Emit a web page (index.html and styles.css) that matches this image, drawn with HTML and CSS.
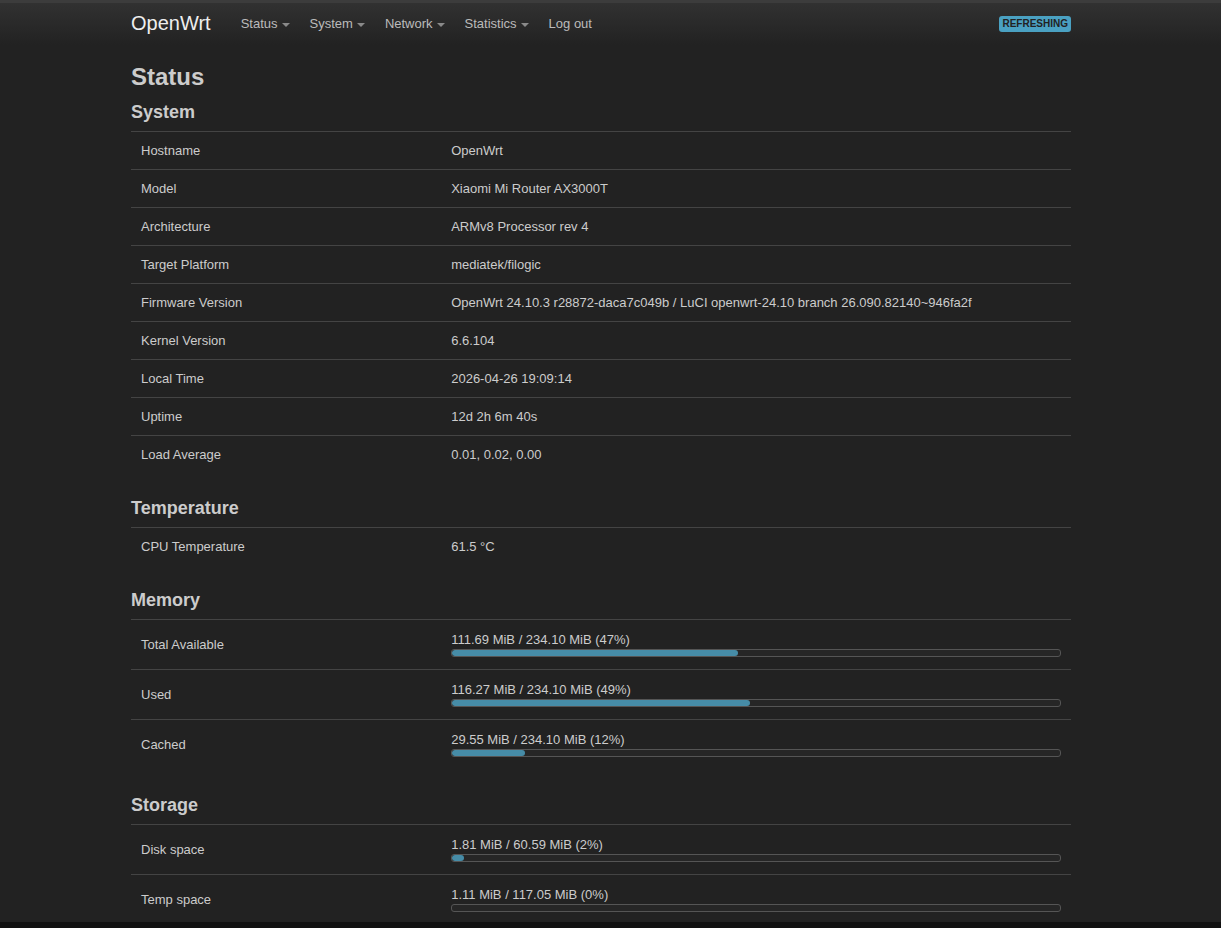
FILE: index.html
```html
<!DOCTYPE html>
<html lang="en">
<head>
<meta charset="UTF-8">
<meta name="viewport" content="width=device-width, initial-scale=1.0">
<title>OpenWrt - Status - LuCI</title>
<link rel="stylesheet" href="styles.css">
</head>
<body>

<header class="navbar">
    <div class="container nav-inner">
        <a class="brand" href="#">OpenWrt</a>
        <ul class="nav">
            <li><a href="#">Status<span class="caret"></span></a></li>
            <li><a href="#">System<span class="caret"></span></a></li>
            <li><a href="#">Network<span class="caret"></span></a></li>
            <li><a href="#">Statistics<span class="caret"></span></a></li>
            <li><a href="#">Log out</a></li>
        </ul>
        <span class="badge">REFRESHING</span>
    </div>
</header>

<main class="container">
    <h2>Status</h2>

    <div class="section">
        <h3>System</h3>
        <div class="table">
            <div class="tr"><div class="td">Hostname</div><div class="td">OpenWrt</div></div>
            <div class="tr"><div class="td">Model</div><div class="td">Xiaomi Mi Router AX3000T</div></div>
            <div class="tr"><div class="td">Architecture</div><div class="td">ARMv8 Processor rev 4</div></div>
            <div class="tr"><div class="td">Target Platform</div><div class="td">mediatek/filogic</div></div>
            <div class="tr"><div class="td">Firmware Version</div><div class="td">OpenWrt 24.10.3 r28872-daca7c049b / LuCI openwrt-24.10 branch 26.090.82140~946fa2f</div></div>
            <div class="tr"><div class="td">Kernel Version</div><div class="td">6.6.104</div></div>
            <div class="tr"><div class="td">Local Time</div><div class="td">2026-04-26 19:09:14</div></div>
            <div class="tr"><div class="td">Uptime</div><div class="td">12d 2h 6m 40s</div></div>
            <div class="tr"><div class="td">Load Average</div><div class="td">0.01, 0.02, 0.00</div></div>
        </div>
    </div>

    <div class="section">
        <h3>Temperature</h3>
        <div class="table">
            <div class="tr"><div class="td">CPU Temperature</div><div class="td">61.5 °C</div></div>
        </div>
    </div>

    <div class="section">
        <h3>Memory</h3>
        <div class="table">
            <div class="tr bar-row">
                <div class="td">Total Available</div>
                <div class="td">
                    <div class="bar-title">111.69 MiB / 234.10 MiB (47%)</div>
                    <div class="cbi-progressbar"><div style="width: 47%"></div></div>
                </div>
            </div>
            <div class="tr bar-row">
                <div class="td">Used</div>
                <div class="td">
                    <div class="bar-title">116.27 MiB / 234.10 MiB (49%)</div>
                    <div class="cbi-progressbar"><div style="width: 49%"></div></div>
                </div>
            </div>
            <div class="tr bar-row">
                <div class="td">Cached</div>
                <div class="td">
                    <div class="bar-title">29.55 MiB / 234.10 MiB (12%)</div>
                    <div class="cbi-progressbar"><div style="width: 12%"></div></div>
                </div>
            </div>
        </div>
    </div>

    <div class="section">
        <h3>Storage</h3>
        <div class="table">
            <div class="tr bar-row">
                <div class="td">Disk space</div>
                <div class="td">
                    <div class="bar-title">1.81 MiB / 60.59 MiB (2%)</div>
                    <div class="cbi-progressbar"><div style="width: 2%"></div></div>
                </div>
            </div>
            <div class="tr bar-row">
                <div class="td">Temp space</div>
                <div class="td">
                    <div class="bar-title">1.11 MiB / 117.05 MiB (0%)</div>
                    <div class="cbi-progressbar"><div style="width: 0%"></div></div>
                </div>
            </div>
        </div>
    </div>
</main>

<div class="screen-edge"></div>

</body>
</html>
```

FILE: styles.css
```css
body {
    margin: 0;
    padding: 0;
    background: #222;
    color: #ccc;
    font-family: "Liberation Sans", Arial, Helvetica, sans-serif;
    font-size: 13px;
    line-height: 16px;
}

a {
    text-decoration: none;
}

/* page is laid out as if a scrollbar took 19px on the right */
.container {
    width: 940px;
    padding-right: 19px;
    margin: 0 auto;
}

/* top bar */
.navbar {
    border-top: 3px solid #3c3c3c;
    height: 42px;
    background: linear-gradient(to bottom, #313131, #222);
}

.nav-inner {
    display: flex;
    align-items: center;
    height: 100%;
}

.brand {
    color: #eee;
    font-size: 20px;
    line-height: 24px;
    padding-right: 20px;
    margin-top: -3px;
}

.nav {
    display: flex;
    list-style: none;
    margin: 0;
    padding: 0;
    flex: 1;
}

.nav a {
    display: block;
    padding: 0 10px;
    color: #bbb;
    font-size: 13px;
}

.caret {
    display: inline-block;
    width: 0;
    height: 0;
    margin-left: 4px;
    vertical-align: middle;
    border-top: 4px solid #8a8a8a;
    border-left: 4px solid transparent;
    border-right: 4px solid transparent;
}

.badge {
    background: #4aa1c2;
    color: #222;
    font-size: 10px;
    font-weight: bold;
    line-height: 16px;
    padding: 0 3px;
    border-radius: 3px;
}

/* content */
h2 {
    font-size: 24px;
    line-height: 26px;
    margin: 19px 0 0;
    color: #ccc;
}

h3 {
    font-size: 18px;
    line-height: 20px;
    margin: 0 0 9px;
    color: #ccc;
}

.section {
    margin-top: 25px;
}

.section:last-child {
    margin-top: 26px;
}

h2 + .section {
    margin-top: 12px;
}

.tr {
    display: grid;
    grid-template-columns: 33% 1fr;
    align-items: center;
    min-height: 37px;
    border-top: 1px solid #444;
}

.td {
    padding: 0 10px;
}

.bar-row {
    min-height: 49px;
}

.bar-title {
    line-height: 14px;
    margin-bottom: 2px;
}

.cbi-progressbar {
    height: 6px;
    border: 1px solid #555;
    border-radius: 3px;
    background: #262626;
    overflow: hidden;
}

.cbi-progressbar div {
    height: 100%;
    background: #468ca7;
    border-radius: 3px;
}

.screen-edge {
    position: fixed;
    left: 0;
    right: 0;
    bottom: 0;
    height: 6px;
    background: #111;
}
```
